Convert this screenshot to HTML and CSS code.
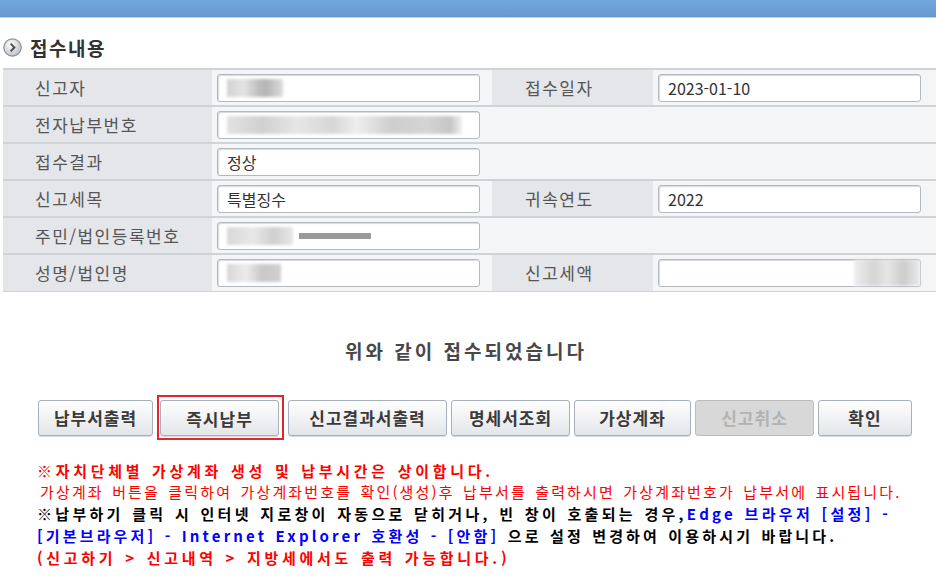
FILE: index.html
```html
<!DOCTYPE html>
<html lang="ko">
<head>
    <meta charset="UTF-8">
    <meta name="viewport" content="width=device-width, initial-scale=1.0">
    <title>접수내용</title>
    <link rel="stylesheet" href="styles.css">
</head>
<body>
    <div class="topbar"></div>

    <h2 class="section-title">
        <svg class="title-icon" width="19" height="19" viewBox="0 0 19 19">
            <defs>
                <radialGradient id="ball" cx="40%" cy="35%" r="70%">
                    <stop offset="0" stop-color="#ffffff"/>
                    <stop offset="1" stop-color="#b9bcc0"/>
                </radialGradient>
            </defs>
            <circle cx="9.5" cy="9.5" r="8.7" fill="url(#ball)" stroke="#8d9196" stroke-width="1.2"/>
            <path d="M7.6 5.6 L11.4 9.5 L7.6 13.4" fill="none" stroke="#4a4d52" stroke-width="2"/>
        </svg>
        접수내용
    </h2>

    <table class="info">
        <colgroup>
            <col class="c-label"><col class="c-value"><col class="c-label2"><col class="c-value2">
        </colgroup>
        <tr>
            <th>신고자</th>
            <td><div class="field"><span class="mask m-name"></span></div></td>
            <th class="th2">접수일자</th>
            <td><div class="field">2023-01-10</div></td>
        </tr>
        <tr>
            <th>전자납부번호</th>
            <td colspan="3"><div class="field"><span class="mask m-long"></span></div></td>
        </tr>
        <tr>
            <th>접수결과</th>
            <td colspan="3"><div class="field">정상</div></td>
        </tr>
        <tr>
            <th>신고세목</th>
            <td><div class="field">특별징수</div></td>
            <th class="th2">귀속연도</th>
            <td><div class="field">2022</div></td>
        </tr>
        <tr>
            <th>주민/법인등록번호</th>
            <td colspan="3"><div class="field"><span class="mask m-id"></span><span class="mask m-id-dark"></span></div></td>
        </tr>
        <tr>
            <th>성명/법인명</th>
            <td><div class="field"><span class="mask m-name2"></span></div></td>
            <th class="th2">신고세액</th>
            <td><div class="field field-right"><span class="mask m-amount"></span></div></td>
        </tr>
    </table>

    <p class="done-msg">위와 같이 접수되었습니다</p>

    <div class="btn-row">
        <button class="btn btn-bill">납부서출력</button>
        <div class="focus-box"><button class="btn btn-pay">즉시납부</button></div>
        <button class="btn btn-result">신고결과서출력</button>
        <button class="btn btn-detail">명세서조회</button>
        <button class="btn btn-account">가상계좌</button>
        <button class="btn btn-cancel" disabled>신고취소</button>
        <button class="btn btn-ok">확인</button>
    </div>

    <div class="notes">
        <p class="red bold wide">※자치단체별 가상계좌 생성 및 납부시간은 상이합니다.</p>
        <p class="red indent">가상계좌 버튼을 클릭하여 가상계좌번호를 확인(생성)후 납부서를 출력하시면 가상계좌번호가 납부서에 표시됩니다.</p>
        <p class="bold">※납부하기 클릭 시 인터넷 지로창이 자동으로 닫히거나, 빈 창이 호출되는 경우,<span class="blue">Edge 브라우저 [설정] -</span></p>
        <p class="bold tight"><span class="blue">[기본브라우저] - Internet Explorer 호환성 - [안함]</span> 으로 설정 변경하여 이용하시기 바랍니다.</p>
        <p class="red bold wide">(신고하기 &gt; 신고내역 &gt; 지방세에서도 출력 가능합니다.)</p>
    </div>
</body>
</html>
```

FILE: styles.css
```css
body { margin: 0; background: #fff; color: #333; font-family: "Noto Sans CJK KR", "Liberation Sans", sans-serif; overflow: hidden; }

.topbar { height: 17px; background: linear-gradient(#70a9de, #6897cf); border-bottom: 1px solid #c3d3e6; }

.section-title { display: flex; align-items: center; gap: 8px; margin: 17px 0 0 3px; height: 24px; font-size: 19px; font-weight: bold; letter-spacing: 1.5px; color: #333; }
.title-icon { flex: none; }

.info { margin: 9px 0 0 3px; width: 933px; border-collapse: collapse; table-layout: fixed; }
.info col.c-label { width: 209px; }
.info col.c-value { width: 280px; }
.info col.c-label2 { width: 161px; }
.info col.c-value2 { width: 283px; }
.info tr { height: 37px; border-top: 2px solid #cfd2d6; border-bottom: 1px solid #cfd2d6; }
.info th { background: #e4e6ea; color: #555; font-weight: normal; font-size: 17px; letter-spacing: 1.5px; text-align: left; padding: 0 0 0 32px; }
.info th.th2 { padding-left: 33px; }
.info td { background: #f4f5f7; padding: 0 0 0 5px; }

.field { box-sizing: border-box; width: 263px; height: 28px; background: #fff; border: 1px solid #b4b9c0; border-radius: 3px; box-shadow: inset 1px 1px 1px #d6d9dd; padding: 0 9px; font-size: 16px; line-height: 26px; color: #333; display: flex; align-items: center; gap: 6px; }
.field-right { justify-content: flex-end; padding-right: 0; }

.mask { display: inline-block; height: 18px; filter: blur(1.5px); }
.m-name { width: 56px; background: linear-gradient(90deg, #d2d2d2, #e4e4e4 30%, #c0c0c0 55%, #b4b4b4 70%, #dedede); }
.m-long { width: 235px; background: linear-gradient(90deg, #e2e2e2, #d0d0d0 15%, #e6e6e6 30%, #d6d6d6 45%, #eeeeee 55%, #cecece 70%, #d4d4d4 85%, #c6c6c6 95%, #f0f0f0); }
.m-id { width: 66px; background: linear-gradient(90deg, #d8d8d8, #e8e8e8 40%, #cfcfcf 70%, #e6e6e6); }
.m-id-dark { width: 72px; height: 6px; background: #9a9a9a; filter: blur(0.6px); }
.m-name2 { width: 54px; background: linear-gradient(90deg, #d6d6d6, #ececec 35%, #c8c8c8 65%, #d0d0d0); }
.m-amount { width: 66px; height: 26px; background: linear-gradient(90deg, #eeeeee, #d4d4d4 30%, #e6e6e6 50%, #cccccc 75%, #eaeaea); }

.done-msg { margin: 45px 0 0; text-align: center; font-size: 19px; font-weight: bold; letter-spacing: 3px; color: #484848; padding-right: 4px; }

.btn-row { display: flex; align-items: center; gap: 4px; margin-top: 31px; padding-left: 38px; height: 46px; }
.btn { box-sizing: border-box; height: 36px; padding: 0; border: 1px solid #a7afba; border-radius: 3px; background: linear-gradient(#fefefe, #f1f2f4 50%, #e2e5e9); font-family: inherit; font-size: 17px; font-weight: bold; letter-spacing: 1px; color: #3a3a3a; box-shadow: 0 1px 0 #d8dbe0; }
.btn:disabled { background: #d8d8d8; border-color: #bcbcbc; color: #b2b2b2; box-shadow: none; }
.btn-bill { width: 115px; }
.btn-pay { width: 119px; }
.btn-result { width: 159px; }
.btn-detail { width: 119px; }
.btn-account { width: 117px; }
.btn-cancel { width: 119px; }
.btn-ok { width: 94px; }
.focus-box { display: flex; border: 2px solid #e3262d; padding: 3px 3px 2px 1px; }

.notes { margin: 19px 0 0 37px; font-size: 15px; line-height: 21.75px; color: #000; }
.notes p { margin: 0; white-space: nowrap; }
.notes .bold { font-weight: bold; letter-spacing: 3.3px; word-spacing: 1px; }
.notes .wide { letter-spacing: 3.7px; }
.notes .tight { letter-spacing: 3.15px; }
.notes .red { color: #ff0000; }
.notes .blue { color: #0000ff; }
.notes .indent { padding-left: 3px; letter-spacing: 2.15px; word-spacing: 2px; }
```
